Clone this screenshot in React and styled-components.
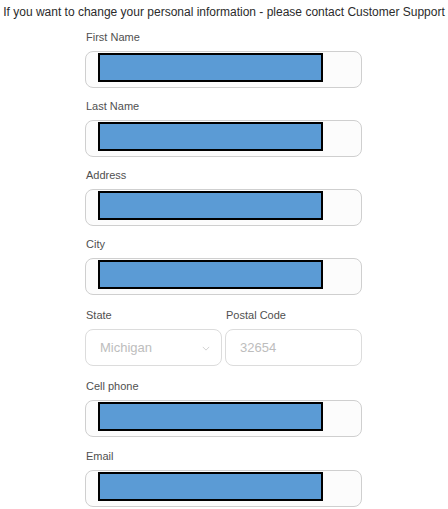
import styled, { createGlobalStyle } from 'styled-components';

const GlobalStyle = createGlobalStyle`
  body {
    margin: 0;
    background: #ffffff;
    font-family: "Liberation Sans", Arial, sans-serif;
  }
`;

const fields = [
  { id: 'first', label: 'First Name', gap: 0 },
  { id: 'last', label: 'Last Name', gap: 10 },
  { id: 'address', label: 'Address', gap: 10 },
  { id: 'city', label: 'City', gap: 10 },
];

const contactFields = [
  { id: 'cell', label: 'Cell phone', gap: 12 },
  { id: 'email', label: 'Email', gap: 11 },
];

const Field = ({ label, gap }) => (
  <FieldBlock $gap={gap}>
    <Label>{label}</Label>
    <InputBox>
      <Redacted />
    </InputBox>
  </FieldBlock>
);

const App = () => {
  return (
    <>
      <GlobalStyle />
      <Page>
        <Notice>
          If you want to change your personal information - please contact Customer Support
        </Notice>
        <Form>
          {fields.map((f) => (
            <Field key={f.id} label={f.label} gap={f.gap} />
          ))}
          <SplitRow>
            <FieldBlock>
              <Label>State</Label>
              <DisabledBox>
                <DisabledText>Michigan</DisabledText>
                <Chevron viewBox="0 0 10 6" aria-hidden="true">
                  <path d="M1 1l4 4 4-4" fill="none" stroke="#c8c8c8" strokeWidth="1" />
                </Chevron>
              </DisabledBox>
            </FieldBlock>
            <FieldBlock>
              <Label>Postal Code</Label>
              <DisabledBox>
                <DisabledText>32654</DisabledText>
              </DisabledBox>
            </FieldBlock>
          </SplitRow>
          {contactFields.map((f) => (
            <Field key={f.id} label={f.label} gap={f.gap} />
          ))}
        </Form>
      </Page>
    </>
  );
};

export default App;

const Page = styled.div`
  width: 448px;
  padding-top: 4px;
`;

const Notice = styled.p`
  margin: 0;
  font-size: 12px;
  line-height: 16px;
  color: #2b2b2b;
  text-align: center;
  white-space: nowrap;
`;

const Form = styled.div`
  width: 277px;
  margin: 9px 0 0 85px;
  display: flex;
  flex-direction: column;
`;

const FieldBlock = styled.div`
  display: flex;
  flex-direction: column;
  min-width: 0;
  margin-top: ${(p) => p.$gap || 0}px;
`;

const Label = styled.label`
  font-size: 11px;
  line-height: 16px;
  color: #505050;
  padding-left: 1px;
  margin-bottom: 6px;
`;

const InputBox = styled.div`
  box-sizing: border-box;
  height: 37px;
  border: 1px solid #cfcfcf;
  border-radius: 8px;
  background: #fcfcfc;
  padding: 1px 0 0 12px;
`;

const Redacted = styled.div`
  box-sizing: border-box;
  width: 225px;
  height: 29px;
  border: 2px solid #000000;
  background: #5b9bd5;
`;

const SplitRow = styled.div`
  display: grid;
  grid-template-columns: 137px 137px;
  gap: 3px;
  margin-top: 12px;
`;

const DisabledBox = styled.div`
  box-sizing: border-box;
  height: 37px;
  border: 1px solid #dcdcdc;
  border-radius: 8px;
  background: #ffffff;
  display: flex;
  align-items: center;
  justify-content: space-between;
  padding: 0 11px 0 14px;
`;

const DisabledText = styled.span`
  font-size: 13px;
  color: #bdbdbd;
`;

const Chevron = styled.svg`
  width: 8px;
  height: 5px;
  margin-top: 1px;
`;
